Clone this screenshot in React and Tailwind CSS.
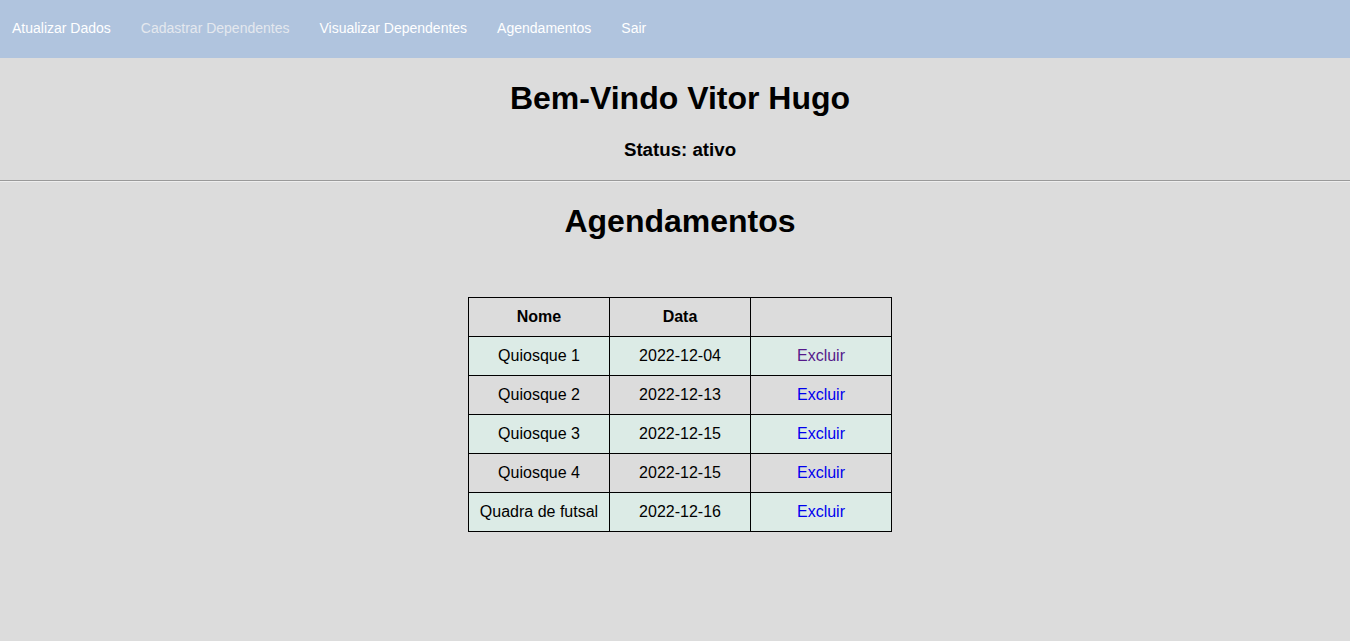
const links = [
  { label: 'Atualizar Dados', cls: 'text-white' },
  { label: 'Cadastrar Dependentes', cls: 'text-[#e4e8ee]' },
  { label: 'Visualizar Dependentes', cls: 'text-white' },
  { label: 'Agendamentos', cls: 'text-white' },
  { label: 'Sair', cls: 'text-white' },
]

const rows = [
  { nome: 'Quiosque 1', data: '2022-12-04', visited: true },
  { nome: 'Quiosque 2', data: '2022-12-13' },
  { nome: 'Quiosque 3', data: '2022-12-15' },
  { nome: 'Quiosque 4', data: '2022-12-15' },
  { nome: 'Quadra de futsal', data: '2022-12-16' },
]

export default function App() {
  return (
    <div className="min-h-[641px] bg-[#dcdcdc] text-black font-['Liberation_Sans',Arial,sans-serif]">
      <nav className="h-[58px] bg-[#b0c4de] flex items-center gap-[30px] pl-3 pb-[1px] text-[14px]">
        {links.map((l) => (
          <a key={l.label} href="#" className={l.cls}>
            {l.label}
          </a>
        ))}
      </nav>

      <div className="pl-[10px]">
        <h1 className="text-center text-[32px] font-bold leading-[37px] mt-[22px]">Bem-Vindo Vitor Hugo</h1>
        <h3 className="text-center text-[18.7px] font-bold leading-[22px] mt-[22px]">Status: ativo</h3>
      </div>
      <hr className="mt-[19px] border-t border-t-[#9a9a9a] border-b border-b-[#eeeeee]" />

      <div className="pl-[10px]">
        <h1 className="text-center text-[32px] font-bold leading-[37px] mt-[21px]">Agendamentos</h1>

        <table className="mx-auto mt-[57px] border-collapse text-[16px] text-center">
          <thead>
            <tr className="h-[39px]">
              <th className="w-[141px] border border-black font-bold">Nome</th>
              <th className="w-[141px] border border-black font-bold">Data</th>
              <th className="w-[141px] border border-black"></th>
            </tr>
          </thead>
          <tbody>
            {rows.map((r, i) => (
              <tr key={r.nome} className={'h-[39px] ' + (i % 2 === 0 ? 'bg-[#dcebe6]' : 'bg-[#dcdcdc]')}>
                <td className="border border-black">{r.nome}</td>
                <td className="border border-black">{r.data}</td>
                <td className="border border-black">
                  <a href="#" className={r.visited ? 'text-[#551a8b]' : 'text-[#0000ee]'}>
                    Excluir
                  </a>
                </td>
              </tr>
            ))}
          </tbody>
        </table>
      </div>
    </div>
  )
}
